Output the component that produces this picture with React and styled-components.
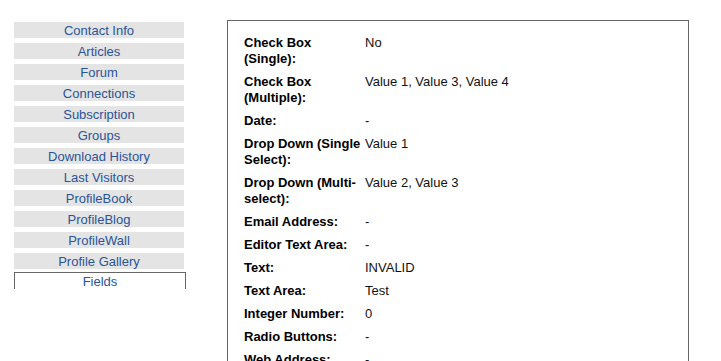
import React from "react";
import styled, { createGlobalStyle } from "styled-components";

const GlobalStyle = createGlobalStyle`
  html, body {
    margin: 0;
    padding: 0;
    background: #ffffff;
    font-family: "Liberation Sans", Arial, sans-serif;
    font-size: 13px;
  }
  body { overflow: hidden; }
`;

const Page = styled.div`
  display: flex;
  align-items: flex-start;
  padding: 20px 0 0 14px;
`;

const Sidebar = styled.nav`
  display: flex;
  flex-direction: column;
  width: 172px;
  padding-top: 2px;
`;

const Tab = styled.a`
  display: block;
  box-sizing: border-box;
  width: ${(p) => (p.$active ? "172px" : "170px")};
  height: ${(p) => (p.$active ? "17px" : "16px")};
  margin-top: ${(p) => (p.$first ? "0" : p.$active ? "3px" : "5px")};
  padding-top: 1px;
  background: ${(p) => (p.$active ? "#ffffff" : "#e4e4e4")};
  border: ${(p) => (p.$active ? "1px solid #666666" : "none")};
  border-bottom: none;
  color: #2a5497;
  font-size: 13px;
  line-height: 15px;
  text-align: center;
  text-decoration: none;
  white-space: nowrap;
  cursor: pointer;
`;

const Panel = styled.section`
  box-sizing: border-box;
  width: 462px;
  margin-left: 41px;
  border: 1px solid #666666;
  padding: 11px 16px 12px;
  background: #ffffff;
`;

const FieldTable = styled.table`
  border-collapse: collapse;
  border-spacing: 0;
  font-size: 13px;
  line-height: 16px;
  color: #000000;
`;

const Label = styled.td`
  width: 118px;
  padding: 3px 3px 4px 0;
  vertical-align: top;
  font-weight: bold;
`;

const Value = styled.td`
  padding: 3px 0 4px 0;
  vertical-align: top;
  color: #111111;
`;

const tabs = [
  "Contact Info",
  "Articles",
  "Forum",
  "Connections",
  "Subscription",
  "Groups",
  "Download History",
  "Last Visitors",
  "ProfileBook",
  "ProfileBlog",
  "ProfileWall",
  "Profile Gallery",
  "Fields",
];

const fields = [
  ["Check Box (Single):", "No"],
  ["Check Box (Multiple):", "Value 1, Value 3, Value 4"],
  ["Date:", "-"],
  ["Drop Down (Single Select):", "Value 1"],
  ["Drop Down (Multi-select):", "Value 2, Value 3"],
  ["Email Address:", "-"],
  ["Editor Text Area:", "-"],
  ["Text:", "INVALID"],
  ["Text Area:", "Test"],
  ["Integer Number:", "0"],
  ["Radio Buttons:", "-"],
  ["Web Address:", "-"],
];

export default function App() {
  return (
    <>
      <GlobalStyle />
      <Page>
        <Sidebar>
          {tabs.map((t, i) => (
            <Tab key={t} $first={i === 0} $active={t === "Fields"}>
              {t}
            </Tab>
          ))}
        </Sidebar>
        <Panel>
          <FieldTable>
            <tbody>
              {fields.map(([l, v]) => (
                <tr key={l}>
                  <Label>{l}</Label>
                  <Value>{v}</Value>
                </tr>
              ))}
            </tbody>
          </FieldTable>
        </Panel>
      </Page>
    </>
  );
}
